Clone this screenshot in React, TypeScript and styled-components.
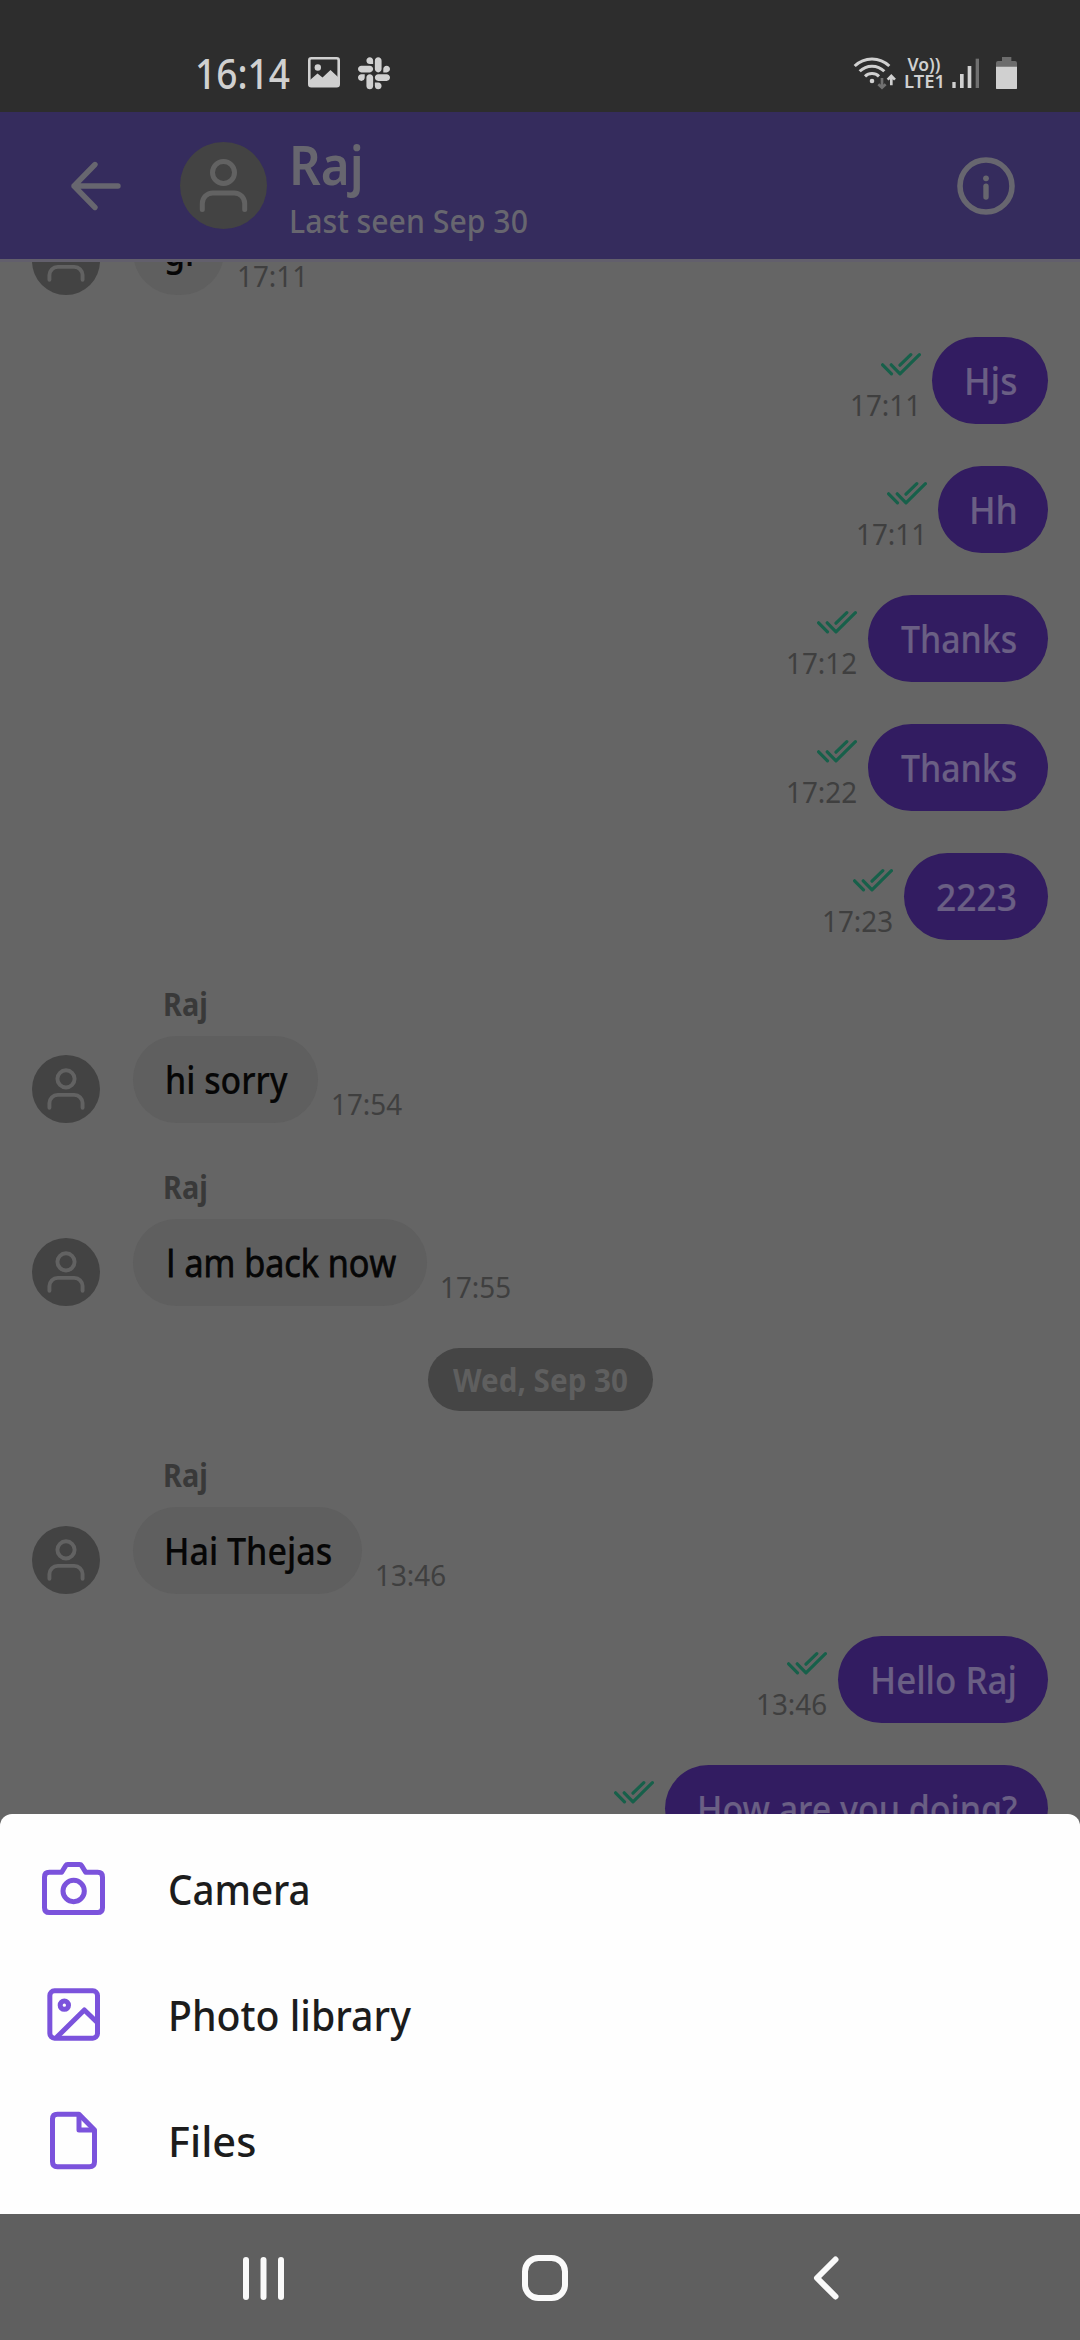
import React, { useLayoutEffect, useRef, useState } from 'react';
import styled, { createGlobalStyle } from 'styled-components';
import { FaSlack } from 'react-icons/fa';

const GlobalStyle = createGlobalStyle`
  * { box-sizing: border-box; }
  body { margin: 0; background: #656565; }
  svg { display: block; flex: none; }
`;

/* ---------- text that is condensed to a given advance width ---------- */

const FitBox = styled.span<{ $width: number }>`
  display: block;
  flex: none;
  width: ${p => p.$width}px;
  white-space: nowrap;
`;

const FitInner = styled.span`
  display: inline-block;
  vertical-align: top;
  transform-origin: 0 50%;
`;

function FitText({ width, children }: { width: number; children: string }) {
  const ref = useRef<HTMLSpanElement>(null);
  const [scale, setScale] = useState(1);
  useLayoutEffect(() => {
    if (ref.current) setScale(width / ref.current.offsetWidth);
  }, [width, children]);
  return (
    <FitBox $width={width}>
      <FitInner ref={ref} style={{ transform: `scaleX(${scale})` }}>{children}</FitInner>
    </FitBox>
  );
}

/* ---------- screen ---------- */

const Screen = styled.div`
  width: 1080px;
  height: 2340px;
  overflow: hidden;
  display: flex;
  flex-direction: column;
  background: #656565;
  font-family: 'Noto Sans', 'Open Sans', Roboto, sans-serif;
  font-weight: 500;
`;

/* ---------- status bar ---------- */

const StatusBar = styled.div`
  flex: none;
  height: 112px;
  padding: 34px 63px 0 195px;
  display: flex;
  align-items: center;
  background: #2d2d2d;
  color: #d0d0d0;
`;

const Clock = styled.div`
  font-size: 41px;
  line-height: 40px;
  margin-right: 18px;
`;

const Notifications = styled.div`
  display: flex;
  align-items: center;
  gap: 18px;
  flex: 1;
`;

const SlackIcon = styled(FaSlack)`
  width: 32px;
  height: 36.6px;
`;

const Indicators = styled.div`
  display: flex;
  align-items: center;
`;

const Network = styled.div`
  width: 40px;
  margin: 0 8px 0 7px;
  display: flex;
  flex-direction: column;
  align-items: center;
  font-size: 17.5px;
  line-height: 17px;
  font-weight: 600;
`;

const Battery = styled.div`
  margin-left: 16px;
`;

/* ---------- header ---------- */

const Header = styled.div`
  flex: none;
  height: 150px;
  padding: 0 64px 0 70px;
  display: flex;
  align-items: center;
  background: #352c5d;
  border-bottom: 3px solid #625f6c;
  color: #67666f;
`;

const HeaderAvatar = styled.div`
  margin-left: 58px;
`;

const Title = styled.div`
  flex: 1;
  align-self: flex-start;
  padding: 22px 0 0 22px;
`;

const PeerName = styled.div`
  font-size: 54px;
  line-height: 60px;
  font-weight: 600;
`;

const LastSeen = styled.div`
  margin-top: 7px;
  font-size: 32px;
  line-height: 40px;
`;

/* ---------- conversation ---------- */

const Conversation = styled.div`
  flex: none;
  height: 1564px;
  overflow: hidden;
`;

/* The list is scrolled to its end, so its first message is partly above the fold. */
const MessageList = styled.div`
  margin-top: -150px;
  padding: 0 32px;
  display: flex;
  flex-direction: column;
`;

const SentRow = styled.div`
  padding-top: 42px;
  display: flex;
  justify-content: flex-end;
`;

const Receipt = styled.div`
  height: 87px;
  padding-top: 16px;
  margin-right: 11px;
  display: flex;
  flex-direction: column;
  align-items: flex-end;
  gap: 12px;
`;

const Time = styled.div`
  font-size: 29.4px;
  line-height: 34px;
  font-weight: 400;
  color: #3f3f3f;
`;

const Bubble = styled.div<{ $width: number; $sent?: boolean; $plainStem?: boolean }>`
  flex: none;
  width: ${p => p.$width}px;
  height: 87px;
  padding-left: 1px;
  border-radius: 43.5px;
  display: flex;
  justify-content: center;
  font-family: ${p => (p.$plainStem ? "'Open Sans', sans-serif" : "'Noto Sans', sans-serif")};
  font-weight: ${p => (p.$plainStem ? 400 : 500)};
  -webkit-text-stroke: ${p => (p.$plainStem ? '0.9px' : '0.2px')} currentColor;
  font-size: 38.5px;
  line-height: 87px;
  background: ${p => (p.$sent ? '#321c61' : '#5f5f5f')};
  color: ${p => (p.$sent ? '#6a5f84' : '#060606')};
`;

const ReceivedRow = styled.div`
  padding-top: 44px;
  display: flex;
  flex-direction: column;
`;

const Sender = styled.div`
  margin: 0 0 12px 131px;
  font-size: 32px;
  line-height: 40px;
  font-weight: 700;
  color: #393939;
`;

const ReceivedBody = styled.div`
  display: flex;
  align-items: flex-end;
  height: 87px;
`;

const BubbleSlot = styled.div`
  margin: 0 13px 0 33px;
`;

const ReceivedTime = styled.div`
  padding-bottom: 2.5px;
`;

const DateRow = styled.div`
  padding-top: 42px;
  display: flex;
  justify-content: center;
`;

const DatePill = styled.div`
  width: 225px;
  height: 63px;
  padding-left: 1px;
  border-radius: 31.5px;
  display: flex;
  justify-content: center;
  font-size: 32px;
  line-height: 63px;
  font-weight: 700;
  background: #454545;
  color: #5f5f5f;
`;

/* ---------- attachment sheet ---------- */

const Sheet = styled.div`
  flex: none;
  position: relative;
  height: 400px;
  margin-top: -12px;
  padding: 11.5px 0 0 40px;
  border-radius: 12px 12px 0 0;
  background: #fefefe;
`;

const Action = styled.div`
  height: 126px;
  display: flex;
  align-items: center;
  gap: 61px;
  font-size: 42px;
  line-height: 126px;
  color: #1c1c1c;
`;

/* ---------- navigation bar ---------- */

const NavBar = styled.div`
  flex: none;
  height: 126px;
  padding: 2px 241px 0 243px;
  display: flex;
  align-items: center;
  background: #5f5f5f;
`;

const HomeSlot = styled.div`
  flex: 1;
  padding-left: 237.5px;
`;

/* ---------- drawings ---------- */

const ImageGlyph = () => (
  <svg width="32" height="32" viewBox="0 0 32 32">
    <rect x="1.3" y="1.3" width="29.4" height="28" rx="2" fill="none" stroke="#d0d0d0" strokeWidth="2.6" />
    <circle cx="9.8" cy="10.5" r="3.2" fill="#d0d0d0" />
    <path d="M2 23 L9.5 16.5 L14.5 20.5 L22.5 13 L30 20 V29.5 H2 Z" fill="#d0d0d0" />
  </svg>
);

const WifiGlyph = () => (
  <svg width="44" height="33.3" viewBox="40 31 132 100" fill="none" stroke="#d0d0d0" strokeWidth="9">
    <path d="M45 61 A74 74 0 0 1 149 61" />
    <path d="M60 77 A52 52 0 0 1 134 77" />
    <path d="M76 92 A30 30 0 0 1 118 92" />
    <circle cx="97" cy="106" r="7" fill="#d0d0d0" stroke="none" />
    <path d="M127 97 V126 M116 116 L127 126 L138 116" stroke="#707070" strokeWidth="8" />
    <path d="M155 119 V92 M144 102 L155 91 L166 102" strokeWidth="8" />
  </svg>
);

const SignalGlyph = () => (
  <svg width="28" height="30.7" viewBox="336 38 84 92" fill="#d0d0d0">
    <rect x="337" y="110" width="10" height="19" />
    <rect x="360" y="86" width="11" height="43" />
    <rect x="383" y="62" width="11" height="67" />
    <rect x="407" y="40" width="10" height="89" fill="#707070" />
  </svg>
);

const BatteryGlyph = () => (
  <svg width="21" height="32.7" viewBox="468 33 63 98">
    <path d="M486 33 H514 V45 H525 Q531 45 531 51 V63 H468 V51 Q468 45 474 45 H486 Z" fill="#6c6c6c" />
    <path d="M468 62 H531 V125 Q531 131 525 131 H474 Q468 131 468 125 Z" fill="#d0d0d0" />
  </svg>
);

const BackArrow = () => (
  <svg width="52" height="52" viewBox="0 0 52 52" fill="none" stroke="#67666f" strokeWidth="5.4" strokeLinecap="round" strokeLinejoin="round">
    <path d="M48 26 H4 M25 4.5 L4 26 L25 47.5" />
  </svg>
);

const InfoGlyph = () => (
  <svg width="60" height="60" viewBox="0 0 60 60">
    <circle cx="30" cy="30" r="26" fill="none" stroke="#67666f" strokeWidth="5.6" />
    <circle cx="30" cy="22.3" r="2.9" fill="#67666f" />
    <path d="M30 30.2 V41" stroke="#67666f" strokeWidth="5.4" strokeLinecap="round" />
  </svg>
);

const AvatarGlyph = ({ size }: { size: number }) => (
  <svg width={size} height={size} viewBox="0 0 87 87">
    <circle cx="43.5" cy="43.5" r="43.5" fill="#434343" />
    <g fill="none" stroke="#626262" strokeWidth="5" strokeLinecap="round">
      <circle cx="43.5" cy="30.5" r="11" />
      <path d="M22.3 67.5 V61.5 A10.5 10.5 0 0 1 32.8 51 H54.2 A10.5 10.5 0 0 1 64.7 61.5 V67.5" />
    </g>
  </svg>
);

const ReadTicks = () => (
  <svg width="40" height="23" viewBox="0 0 40 23" fill="none" stroke="#17604a" strokeWidth="3.2" strokeLinecap="round" strokeLinejoin="round">
    <path d="M1.6 11.8 L10.5 20.8" />
    <path d="M10.2 11.8 L19 20.8 L38.4 1.7" />
    <path d="M19 12.2 L29.8 1.7" />
  </svg>
);

const CameraGlyph = () => (
  <svg width="67" height="67" viewBox="120 195 201 201" fill="none" stroke="#7b53dc" strokeWidth="15" strokeLinejoin="round">
    <path d="M148 247 H185 L197 227 Q199 223.5 203 223.5 H239 Q243 223.5 245 227 L257 247 H293 Q307.5 247 307.5 261.5 V353 Q307.5 367.5 293 367.5 H148 Q133.5 367.5 133.5 353 V261.5 Q133.5 247 148 247 Z" />
    <circle cx="221" cy="303" r="32" />
  </svg>
);

const PhotoGlyph = () => (
  <svg width="67" height="67" viewBox="120 573 201 201" fill="none" stroke="#7b53dc" strokeWidth="15" strokeLinejoin="round">
    <rect x="149.5" y="602.5" width="143" height="142" rx="14" />
    <circle cx="193" cy="645.5" r="12.5" />
    <path d="M170 742 L253 660 L291 697" />
  </svg>
);

const FileGlyph = () => (
  <svg width="67" height="67" viewBox="120 951 201 201" fill="none" stroke="#7b53dc" strokeWidth="15" strokeLinejoin="round">
    <path d="M172 972.5 H237 L283.5 1020 V1115 Q283.5 1130 268.5 1130 H172 Q157.5 1130 157.5 1115 V987 Q157.5 972.5 172 972.5 Z" />
    <path d="M237 974 V1020 H283" />
  </svg>
);

const RecentsGlyph = () => (
  <svg width="41" height="43" viewBox="0 0 41 43" fill="#fafafa">
    <rect x="0" width="6" height="43" rx="3" />
    <rect x="17.5" width="6" height="43" rx="3" />
    <rect x="35" width="6" height="43" rx="3" />
  </svg>
);

const HomeGlyph = () => (
  <svg width="46" height="46" viewBox="0 0 46 46">
    <rect x="3" y="3" width="40" height="40" rx="13.5" fill="none" stroke="#fafafa" strokeWidth="6" />
  </svg>
);

const BackGlyph = () => (
  <svg width="26" height="44" viewBox="0 0 26 44">
    <path d="M22.5 3.5 L4 22 L22.5 40.5" fill="none" stroke="#fafafa" strokeWidth="6" strokeLinecap="round" strokeLinejoin="round" />
  </svg>
);

/* ---------- data and rows ---------- */

type Entry = {
  kind: 'sent' | 'received' | 'date';
  text: string;
  textWidth: number;
  bubble?: number;
  time?: string;
  sender?: string;
};

const entries: Entry[] = [
  { kind: 'received', sender: 'Raj', text: 'gi', textWidth: 30, bubble: 91, time: '17:11' },
  { kind: 'sent', text: 'Hjs', textWidth: 53.5, bubble: 116, time: '17:11' },
  { kind: 'sent', text: 'Hh', textWidth: 49, bubble: 110, time: '17:11' },
  { kind: 'sent', text: 'Thanks', textWidth: 116, bubble: 180, time: '17:12' },
  { kind: 'sent', text: 'Thanks', textWidth: 116, bubble: 180, time: '17:22' },
  { kind: 'sent', text: '2223', textWidth: 81, bubble: 144, time: '17:23' },
  { kind: 'received', sender: 'Raj', text: 'hi sorry', textWidth: 123, bubble: 185, time: '17:54' },
  { kind: 'received', sender: 'Raj', text: 'I am back now', textWidth: 230, bubble: 294, time: '17:55' },
  { kind: 'date', text: 'Wed, Sep 30', textWidth: 175 },
  { kind: 'received', sender: 'Raj', text: 'Hai Thejas', textWidth: 168, bubble: 229, time: '13:46' },
  { kind: 'sent', text: 'Hello Raj', textWidth: 147, bubble: 210, time: '13:46' },
  { kind: 'sent', text: 'How are you doing?', textWidth: 320, bubble: 383, time: '13:46' },
];

function MessageTime({ value }: { value: string }) {
  return (
    <Time>
      <FitText width={71}>{value}</FitText>
    </Time>
  );
}

function EntryRow({ entry }: { entry: Entry }) {
  const label = <FitText width={entry.textWidth}>{entry.text}</FitText>;
  if (entry.kind === 'date') {
    return (
      <DateRow>
        <DatePill>{label}</DatePill>
      </DateRow>
    );
  }
  if (entry.kind === 'sent') {
    return (
      <SentRow>
        <Receipt>
          <ReadTicks />
          <MessageTime value={entry.time ?? ''} />
        </Receipt>
        <Bubble $sent $width={entry.bubble ?? 0}>{label}</Bubble>
      </SentRow>
    );
  }
  return (
    <ReceivedRow>
      <Sender>
        <FitText width={45}>{entry.sender ?? ''}</FitText>
      </Sender>
      <ReceivedBody>
        <AvatarGlyph size={68} />
        <BubbleSlot>
          <Bubble $width={entry.bubble ?? 0} $plainStem={entry.text.includes('I')}>{label}</Bubble>
        </BubbleSlot>
        <ReceivedTime>
          <MessageTime value={entry.time ?? ''} />
        </ReceivedTime>
      </ReceivedBody>
    </ReceivedRow>
  );
}

export default function App() {
  return (
    <Screen>
      <GlobalStyle />
      <StatusBar>
        <Clock>
          <FitText width={95}>16:14</FitText>
        </Clock>
        <Notifications>
          <ImageGlyph />
          <SlackIcon />
        </Notifications>
        <Indicators>
          <WifiGlyph />
          <Network>
            <FitText width={33}>Vo))</FitText>
            <FitText width={41}>LTE1</FitText>
          </Network>
          <SignalGlyph />
          <Battery>
            <BatteryGlyph />
          </Battery>
        </Indicators>
      </StatusBar>
      <Header>
        <BackArrow />
        <HeaderAvatar>
          <AvatarGlyph size={87} />
        </HeaderAvatar>
        <Title>
          <PeerName>
            <FitText width={75}>Raj</FitText>
          </PeerName>
          <LastSeen>
            <FitText width={239}>Last seen Sep 30</FitText>
          </LastSeen>
        </Title>
        <InfoGlyph />
      </Header>
      <Conversation>
        <MessageList>
          {entries.map((entry, i) => (
            <EntryRow key={i} entry={entry} />
          ))}
        </MessageList>
      </Conversation>
      <Sheet>
        <Action>
          <CameraGlyph />
          <FitText width={143}>Camera</FitText>
        </Action>
        <Action>
          <PhotoGlyph />
          <FitText width={243}>Photo library</FitText>
        </Action>
        <Action>
          <FileGlyph />
          <FitText width={88}>Files</FitText>
        </Action>
      </Sheet>
      <NavBar>
        <RecentsGlyph />
        <HomeSlot>
          <HomeGlyph />
        </HomeSlot>
        <BackGlyph />
      </NavBar>
    </Screen>
  );
}
